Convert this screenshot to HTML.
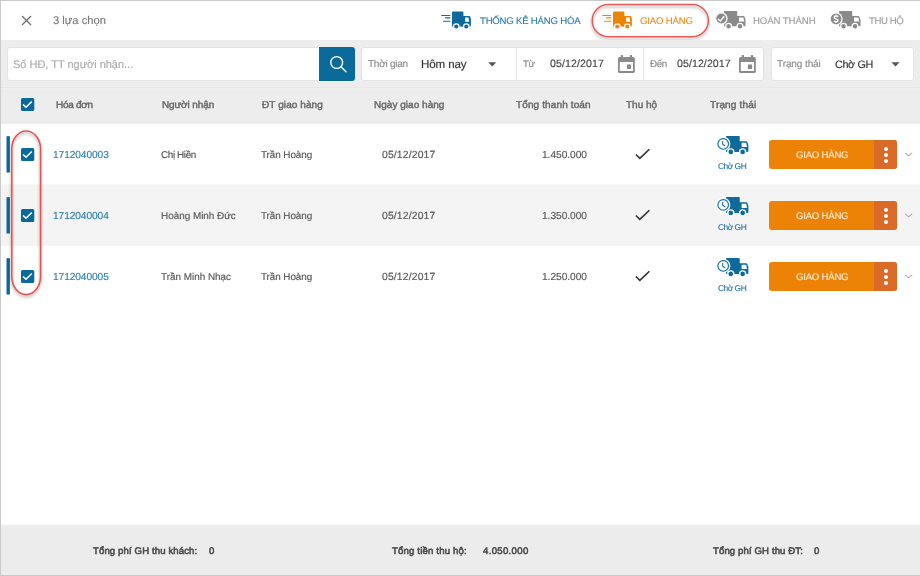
<!DOCTYPE html>
<html><head><meta charset="utf-8">
<style>
*{box-sizing:border-box;margin:0;padding:0}
html,body{width:920px;height:576px;overflow:hidden;background:#fff;font-family:"Liberation Sans",sans-serif}
.a{position:absolute}
.t{position:absolute;white-space:nowrap;line-height:1;text-rendering:geometricPrecision;-webkit-text-stroke:0.15px currentColor;will-change:transform}
.box{background:#fff;border:1px solid #e3e3e3;border-radius:3px}
</style></head><body><div id="w" style="position:absolute;left:0;top:0;width:920px;height:576px;overflow:hidden;filter:blur(0.3px)">
<div class="a" style="left:0;top:0;width:1px;height:576px;background:#cacaca"></div>
<div class="a" style="left:0;top:0;width:920px;height:1px;background:#cacaca"></div>
<div class="a" style="left:0;top:575px;width:920px;height:1px;background:#cacaca"></div>
<svg class="a" style="left:20px;top:14px" width="13" height="13" viewBox="0 0 13 13"><path d="M2 2L11 11M11 2L2 11" stroke="#707070" stroke-width="1.4" fill="none"/></svg>
<div class="t" style="left:53.00px;top:16px;font-size:11.2px;color:#7a7a7a;letter-spacing:0.006px;">3 lựa chọn</div>
<svg class="a" style="left:441px;top:11px;overflow:visible" width="32" height="20" viewBox="0 0 32 20"><g transform="scale(1.0)"><path d="M0.7 4.5H8.9M4.5 6.8H8.9M2.6 10.25H8.9" stroke="#0e6a9b" stroke-width="1.2" stroke-linecap="round"/><rect x="11" y="0.6" width="11.4" height="15" rx="0.9" fill="#0e6a9b"/><path d="M20.5 5.1H28.3Q29.1 5.1 29.4 5.9L29.9 8.3V14.6Q29.9 15.6 29 15.6H20.5Z" fill="#0e6a9b"/><path d="M24.1 6.4H27.5L28.2 10.75H24.1Z" fill="#fff"/><circle cx="15.3" cy="15.5" r="2.7" fill="#0e6a9b" stroke="#fff" stroke-width="1.2"/><circle cx="25.3" cy="15.5" r="2.7" fill="#0e6a9b" stroke="#fff" stroke-width="1.2"/></g></svg>
<div class="t" style="left:479.60px;top:17px;font-size:9.6px;color:#2a7aa8;letter-spacing:-0.213px;-webkit-text-stroke:0.12px currentColor;">THỐNG KÊ HÀNG HÓA</div>
<svg class="a" style="left:585px;top:0px;overflow:visible" width="132" height="46" viewBox="585 0 132 46"><defs><filter id="sh" x="-20%" y="-50%" width="140%" height="200%"><feGaussianBlur in="SourceAlpha" stdDeviation="1.5"/><feOffset dy="1.5"/><feComponentTransfer><feFuncA type="linear" slope="0.35"/></feComponentTransfer><feMerge><feMergeNode/><feMergeNode in="SourceGraphic"/></feMerge></filter></defs><rect x="592.2" y="4.6" width="116.2" height="32.1" rx="16.05" fill="none" stroke="#e45a57" stroke-width="1.5" filter="url(#sh)"/></svg>
<svg class="a" style="left:601.9px;top:11px;overflow:visible" width="32" height="20" viewBox="0 0 32 20"><g transform="scale(1.0)"><path d="M0.7 4.5H8.9M4.5 6.8H8.9M2.6 10.25H8.9" stroke="#ec8406" stroke-width="1.2" stroke-linecap="round"/><rect x="11" y="0.6" width="11.4" height="15" rx="0.9" fill="#ec8406"/><path d="M20.5 5.1H28.3Q29.1 5.1 29.4 5.9L29.9 8.3V14.6Q29.9 15.6 29 15.6H20.5Z" fill="#ec8406"/><path d="M24.1 6.4H27.5L28.2 10.75H24.1Z" fill="#fff"/><circle cx="15.3" cy="15.5" r="2.7" fill="#ec8406" stroke="#fff" stroke-width="1.2"/><circle cx="25.3" cy="15.5" r="2.7" fill="#ec8406" stroke="#fff" stroke-width="1.2"/></g></svg>
<div class="t" style="left:640.10px;top:17px;font-size:9.6px;color:#ec8a1c;letter-spacing:-0.176px;-webkit-text-stroke:0.12px currentColor;">GIAO HÀNG</div>
<svg class="a" style="left:713.9px;top:7.300000000000001px;overflow:visible" width="36" height="24" viewBox="-10 -4 36 24"><g transform="scale(1.0)"><rect x="0" y="0.1" width="13.2" height="15.2" rx="0.6" fill="#8a8a8a"/><path d="M11.5 5.1H19.4Q20.3 5.1 20.6 5.9L21.5 8.7V14.4Q21.5 15.3 20.7 15.3H11.5Z" fill="#8a8a8a"/><path d="M15 6.4H19.4L20.2 10.5H15Z" fill="#fff"/><circle cx="4.6" cy="15.3" r="2.9" fill="#8a8a8a" stroke="#fff" stroke-width="1.3"/><circle cx="16" cy="15.3" r="2.9" fill="#8a8a8a" stroke="#fff" stroke-width="1.3"/><circle cx="-2.7" cy="7.5" r="6.3" fill="#fff"/><circle cx="-2.7" cy="7.5" r="5.0" fill="#8a8a8a"/><path d="M-6.0 8.0L-3.7 10.1L0.2 5.2" stroke="#fff" stroke-width="1.4" fill="none"/></g></svg>
<div class="t" style="left:753.00px;top:17px;font-size:9.6px;color:#9a9a9a;letter-spacing:-0.076px;-webkit-text-stroke:0.12px currentColor;">HOÀN THÀNH</div>
<svg class="a" style="left:829.25px;top:7.300000000000001px;overflow:visible" width="36" height="24" viewBox="-10 -4 36 24"><g transform="scale(1.0)"><rect x="0" y="0.1" width="13.2" height="15.2" rx="0.6" fill="#8a8a8a"/><path d="M11.5 5.1H19.4Q20.3 5.1 20.6 5.9L21.5 8.7V14.4Q21.5 15.3 20.7 15.3H11.5Z" fill="#8a8a8a"/><path d="M15 6.4H19.4L20.2 10.5H15Z" fill="#fff"/><circle cx="4.6" cy="15.3" r="2.9" fill="#8a8a8a" stroke="#fff" stroke-width="1.3"/><circle cx="16" cy="15.3" r="2.9" fill="#8a8a8a" stroke="#fff" stroke-width="1.3"/><circle cx="-2.95" cy="7.9" r="6.6" fill="#fff"/><circle cx="-2.95" cy="7.9" r="5.35" fill="#8a8a8a"/><g transform="translate(-2.95 7.9)"><path d="M1.9 -1.9C1.7 -2.6 1.1 -2.9 0 -2.9C-1.2 -2.9 -1.9 -2.3 -1.9 -1.5C-1.9 -0.6 -1.0 -0.3 0 0C1.1 0.3 2.0 0.6 2.0 1.6C2.0 2.5 1.2 2.9 0 2.9C-1.1 2.9 -1.8 2.5 -2.1 1.8" stroke="#fff" stroke-width="1.35" fill="none"/><path d="M0 -4.2V-2.8M0 2.8V4.2" stroke="#fff" stroke-width="1.2"/></g></g></svg>
<div class="t" style="left:868.90px;top:17px;font-size:9.6px;color:#9a9a9a;letter-spacing:-0.398px;-webkit-text-stroke:0.12px currentColor;">THU HỘ</div>
<div class="a" style="left:1px;top:40px;width:919px;height:48px;background:#ededed"></div>
<div class="a box" style="left:7px;top:47px;width:349px;height:34px"></div>
<div class="t" style="left:12.70px;top:60px;font-size:11px;color:#ababab;letter-spacing:-0.016px;">Số HĐ, TT người nhận...</div>
<div class="a" style="left:319px;top:47px;width:36px;height:34px;background:#0a6b9b;border-radius:0 3px 3px 0"></div>
<svg class="a" style="left:326px;top:52px" width="24" height="24" viewBox="0 0 24 24"><circle cx="10.7" cy="10.5" r="5.9" stroke="#fff" stroke-width="1.4" fill="none"/><path d="M15.2 15L20 19.8" stroke="#fff" stroke-width="1.5" stroke-linecap="round"/></svg>
<div class="a box" style="left:361px;top:47px;width:403px;height:34px"></div>
<div class="a" style="left:516px;top:47px;width:1px;height:34px;background:#e4e4e4"></div>
<div class="a" style="left:643px;top:47px;width:1px;height:34px;background:#e4e4e4"></div>
<div class="a box" style="left:771px;top:47px;width:143px;height:34px"></div>
<div class="t" style="left:367.60px;top:60px;font-size:10px;color:#8a8a8a;letter-spacing:-0.253px;">Thời gian</div>
<div class="t" style="left:421.10px;top:59px;font-size:11.6px;color:#333333;letter-spacing:-0.122px;">Hôm nay</div>
<svg class="a" style="left:486px;top:60px" width="12" height="8" viewBox="0 0 12 8"><path d="M2.2 2.3H10.3L6.25 6.5Z" fill="#555"/></svg>
<div class="t" style="left:523.30px;top:60px;font-size:9.6px;color:#8a8a8a;letter-spacing:-0.388px;">Từ</div>
<div class="t" style="left:550.30px;top:59px;font-size:10.6px;color:#444444;letter-spacing:0.094px;">05/12/2017</div>
<svg class="a" style="left:617px;top:53.8px" width="19" height="20" viewBox="-1 -3 19 20"><rect x="0" y="0" width="16.8" height="16" rx="1.6" fill="#8a8a8a"/><rect x="1.8" y="5" width="13.2" height="9" fill="#fff"/><rect x="8.9" y="7.5" width="4.2" height="4.5" fill="#8a8a8a"/><rect x="2.7" y="-1.9" width="2.3" height="2.5" fill="#8a8a8a"/><rect x="11.8" y="-1.9" width="2.3" height="2.5" fill="#8a8a8a"/></svg>
<div class="t" style="left:650.30px;top:60px;font-size:9.8px;color:#8a8a8a;letter-spacing:-0.441px;">Đến</div>
<div class="t" style="left:677.30px;top:59px;font-size:10.6px;color:#444444;letter-spacing:0.072px;">05/12/2017</div>
<svg class="a" style="left:738.1px;top:53.8px" width="19" height="20" viewBox="-1 -3 19 20"><rect x="0" y="0" width="16.8" height="16" rx="1.6" fill="#8a8a8a"/><rect x="1.8" y="5" width="13.2" height="9" fill="#fff"/><rect x="8.9" y="7.5" width="4.2" height="4.5" fill="#8a8a8a"/><rect x="2.7" y="-1.9" width="2.3" height="2.5" fill="#8a8a8a"/><rect x="11.8" y="-1.9" width="2.3" height="2.5" fill="#8a8a8a"/></svg>
<div class="t" style="left:777.10px;top:60px;font-size:10px;color:#8a8a8a;letter-spacing:-0.094px;">Trạng thái</div>
<div class="t" style="left:834.90px;top:60px;font-size:10.8px;color:#333333;letter-spacing:-0.359px;">Chờ GH</div>
<svg class="a" style="left:889px;top:60px" width="12" height="8" viewBox="0 0 12 8"><path d="M2.4 2.2H10.6L6.5 6.5Z" fill="#555"/></svg>
<svg class="a" style="left:0;top:0" width="920" height="576"><rect x="1" y="87.2" width="919" height="1" fill="#e5e5e5"/><rect x="1" y="88.2" width="919" height="35.3" fill="#ededed"/><rect x="1" y="121.8" width="919" height="1.7" fill="#e9e9e9"/></svg>
<svg class="a" style="left:20.8px;top:98px" width="14" height="14" viewBox="0 0 14 14"><rect x="0" y="0" width="13.3" height="13.1" rx="1.6" fill="#09699a"/><path d="M2 6.5L5 9.2L10.8 3.5" stroke="#fff" stroke-width="1.6" fill="none"/></svg>
<div class="t" style="left:55.70px;top:101px;font-size:10px;color:#666666;letter-spacing:-0.283px;-webkit-text-stroke:0.42px currentColor;">Hóa đơn</div>
<div class="t" style="left:161.70px;top:101px;font-size:10px;color:#666666;letter-spacing:-0.119px;-webkit-text-stroke:0.42px currentColor;">Người nhận</div>
<div class="t" style="left:262.00px;top:101px;font-size:10px;color:#666666;letter-spacing:0.086px;-webkit-text-stroke:0.42px currentColor;">ĐT giao hàng</div>
<div class="t" style="left:373.50px;top:101px;font-size:10px;color:#666666;letter-spacing:0.027px;-webkit-text-stroke:0.42px currentColor;">Ngày giao hàng</div>
<div class="t" style="left:516.40px;top:101px;font-size:10px;color:#666666;letter-spacing:0.125px;-webkit-text-stroke:0.42px currentColor;">Tổng thanh toán</div>
<div class="t" style="left:625.80px;top:101px;font-size:10px;color:#666666;letter-spacing:-0.005px;-webkit-text-stroke:0.42px currentColor;">Thu hộ</div>
<div class="t" style="left:709.70px;top:101px;font-size:10px;color:#666666;letter-spacing:0.161px;-webkit-text-stroke:0.42px currentColor;">Trạng thái</div>
<svg class="a" style="left:0;top:0" width="920" height="576"><rect x="1" y="184.4" width="919" height="61.4" fill="#f4f4f4"/></svg>
<svg class="a" style="left:0;top:0px" width="20" height="200"><rect x="6.5" y="136.2" width="3.4" height="36.3" fill="#09699a"/></svg>
<svg class="a" style="left:20.8px;top:147.8px" width="14" height="14" viewBox="0 0 14 14"><rect x="0" y="0" width="13.3" height="13.1" rx="1.6" fill="#09699a"/><path d="M2 6.5L5 9.2L10.8 3.5" stroke="#fff" stroke-width="1.6" fill="none"/></svg>
<div class="t" style="left:52.60px;top:151px;font-size:10.2px;color:#2b7fae;letter-spacing:-0.093px;">1712040003</div>
<div class="t" style="left:161.30px;top:151px;font-size:9.9px;color:#555555;letter-spacing:-0.367px;">Chị Hiền</div>
<div class="t" style="left:261.30px;top:151px;font-size:9.9px;color:#555555;letter-spacing:-0.069px;">Trần Hoàng</div>
<div class="t" style="left:381.50px;top:151px;font-size:10.4px;color:#555555;letter-spacing:0.139px;">05/12/2017</div>
<div class="t" style="left:542.00px;top:151px;font-size:10.2px;color:#555555;letter-spacing:-0.049px;">1.450.000</div>
<svg class="a" style="left:631px;top:143px" width="24" height="20" viewBox="0 0 24 20"><path d="M4.9 11.5L8.85 15.3L18.4 6.25" stroke="#333" stroke-width="1.7" fill="none"/></svg>
<svg class="a" style="left:715.6px;top:132.0px;overflow:visible" width="36" height="24" viewBox="-10 -4 36 24"><g transform="scale(1.04)"><rect x="0" y="0.1" width="13.2" height="15.2" rx="0.6" fill="#0e6a9b"/><path d="M11.5 5.1H19.4Q20.3 5.1 20.6 5.9L21.5 8.7V14.4Q21.5 15.3 20.7 15.3H11.5Z" fill="#0e6a9b"/><path d="M15 6.4H19.4L20.2 10.5H15Z" fill="#fff"/><circle cx="4.6" cy="15.3" r="2.9" fill="#0e6a9b" stroke="#fff" stroke-width="1.3"/><circle cx="16" cy="15.3" r="2.9" fill="#0e6a9b" stroke="#fff" stroke-width="1.3"/><circle cx="-2.7" cy="7.6" r="6.9" fill="#fff"/><circle cx="-2.7" cy="7.6" r="5.1" fill="#fff" stroke="#0e6a9b" stroke-width="1.1"/><path d="M-3.2 4.9V7.9L-0.7 9.6" stroke="#0e6a9b" stroke-width="1" fill="none"/></g></svg>
<div class="t" style="left:717.90px;top:162px;font-size:8.4px;color:#1f6f9e;letter-spacing:-0.477px;-webkit-text-stroke:0.1px currentColor;">Chờ GH</div>
<div class="a" style="left:769px;top:140px;width:128px;height:29px;background:#ec8206;border-radius:3px;overflow:hidden"><div class="a" style="left:105px;top:0;width:23px;height:29px;background:#d96a28"></div></div>
<div class="a" style="left:883.5px;top:146.7px;width:4px;height:4px;border-radius:50%;background:#fff"></div>
<div class="a" style="left:883.5px;top:152.7px;width:4px;height:4px;border-radius:50%;background:#fff"></div>
<div class="a" style="left:883.5px;top:158.8px;width:4px;height:4px;border-radius:50%;background:#fff"></div>
<div class="t" style="left:795.70px;top:151px;font-size:9.6px;color:#fde8d0;letter-spacing:-0.226px;">GIAO HÀNG</div>
<svg class="a" style="left:903px;top:150px" width="12" height="9" viewBox="0 0 12 9"><path d="M2.1 2.9L5.6 5.9L9.1 2.9" stroke="#a8a8a8" stroke-width="1.1" fill="none"/></svg>
<svg class="a" style="left:0;top:61px" width="20" height="200"><rect x="6.5" y="136.2" width="3.4" height="36.3" fill="#09699a"/></svg>
<svg class="a" style="left:20.8px;top:208.8px" width="14" height="14" viewBox="0 0 14 14"><rect x="0" y="0" width="13.3" height="13.1" rx="1.6" fill="#09699a"/><path d="M2 6.5L5 9.2L10.8 3.5" stroke="#fff" stroke-width="1.6" fill="none"/></svg>
<div class="t" style="left:52.60px;top:212px;font-size:10.2px;color:#2b7fae;letter-spacing:-0.093px;">1712040004</div>
<div class="t" style="left:161.30px;top:212px;font-size:9.9px;color:#555555;letter-spacing:0.010px;">Hoàng Minh Đức</div>
<div class="t" style="left:261.30px;top:212px;font-size:9.9px;color:#555555;letter-spacing:-0.069px;">Trần Hoàng</div>
<div class="t" style="left:381.50px;top:212px;font-size:10.4px;color:#555555;letter-spacing:0.139px;">05/12/2017</div>
<div class="t" style="left:542.00px;top:212px;font-size:10.2px;color:#555555;letter-spacing:-0.049px;">1.350.000</div>
<svg class="a" style="left:631px;top:204px" width="24" height="20" viewBox="0 0 24 20"><path d="M4.9 11.5L8.85 15.3L18.4 6.25" stroke="#333" stroke-width="1.7" fill="none"/></svg>
<svg class="a" style="left:715.6px;top:193.0px;overflow:visible" width="36" height="24" viewBox="-10 -4 36 24"><g transform="scale(1.04)"><rect x="0" y="0.1" width="13.2" height="15.2" rx="0.6" fill="#0e6a9b"/><path d="M11.5 5.1H19.4Q20.3 5.1 20.6 5.9L21.5 8.7V14.4Q21.5 15.3 20.7 15.3H11.5Z" fill="#0e6a9b"/><path d="M15 6.4H19.4L20.2 10.5H15Z" fill="#fff"/><circle cx="4.6" cy="15.3" r="2.9" fill="#0e6a9b" stroke="#fff" stroke-width="1.3"/><circle cx="16" cy="15.3" r="2.9" fill="#0e6a9b" stroke="#fff" stroke-width="1.3"/><circle cx="-2.7" cy="7.6" r="6.9" fill="#fff"/><circle cx="-2.7" cy="7.6" r="5.1" fill="#fff" stroke="#0e6a9b" stroke-width="1.1"/><path d="M-3.2 4.9V7.9L-0.7 9.6" stroke="#0e6a9b" stroke-width="1" fill="none"/></g></svg>
<div class="t" style="left:717.90px;top:223px;font-size:8.4px;color:#1f6f9e;letter-spacing:-0.477px;-webkit-text-stroke:0.1px currentColor;">Chờ GH</div>
<div class="a" style="left:769px;top:201px;width:128px;height:29px;background:#ec8206;border-radius:3px;overflow:hidden"><div class="a" style="left:105px;top:0;width:23px;height:29px;background:#d96a28"></div></div>
<div class="a" style="left:883.5px;top:207.7px;width:4px;height:4px;border-radius:50%;background:#fff"></div>
<div class="a" style="left:883.5px;top:213.7px;width:4px;height:4px;border-radius:50%;background:#fff"></div>
<div class="a" style="left:883.5px;top:219.8px;width:4px;height:4px;border-radius:50%;background:#fff"></div>
<div class="t" style="left:795.70px;top:212px;font-size:9.6px;color:#fde8d0;letter-spacing:-0.226px;">GIAO HÀNG</div>
<svg class="a" style="left:903px;top:211px" width="12" height="9" viewBox="0 0 12 9"><path d="M2.1 2.9L5.6 5.9L9.1 2.9" stroke="#a8a8a8" stroke-width="1.1" fill="none"/></svg>
<svg class="a" style="left:0;top:122px" width="20" height="200"><rect x="6.5" y="136.2" width="3.4" height="36.3" fill="#09699a"/></svg>
<svg class="a" style="left:20.8px;top:269.8px" width="14" height="14" viewBox="0 0 14 14"><rect x="0" y="0" width="13.3" height="13.1" rx="1.6" fill="#09699a"/><path d="M2 6.5L5 9.2L10.8 3.5" stroke="#fff" stroke-width="1.6" fill="none"/></svg>
<div class="t" style="left:52.60px;top:273px;font-size:10.2px;color:#2b7fae;letter-spacing:-0.093px;">1712040005</div>
<div class="t" style="left:161.30px;top:273px;font-size:9.9px;color:#555555;letter-spacing:0.010px;">Trần Minh Nhạc</div>
<div class="t" style="left:261.30px;top:273px;font-size:9.9px;color:#555555;letter-spacing:-0.069px;">Trần Hoàng</div>
<div class="t" style="left:381.50px;top:273px;font-size:10.4px;color:#555555;letter-spacing:0.139px;">05/12/2017</div>
<div class="t" style="left:542.00px;top:273px;font-size:10.2px;color:#555555;letter-spacing:-0.049px;">1.250.000</div>
<svg class="a" style="left:631px;top:265px" width="24" height="20" viewBox="0 0 24 20"><path d="M4.9 11.5L8.85 15.3L18.4 6.25" stroke="#333" stroke-width="1.7" fill="none"/></svg>
<svg class="a" style="left:715.6px;top:254.0px;overflow:visible" width="36" height="24" viewBox="-10 -4 36 24"><g transform="scale(1.04)"><rect x="0" y="0.1" width="13.2" height="15.2" rx="0.6" fill="#0e6a9b"/><path d="M11.5 5.1H19.4Q20.3 5.1 20.6 5.9L21.5 8.7V14.4Q21.5 15.3 20.7 15.3H11.5Z" fill="#0e6a9b"/><path d="M15 6.4H19.4L20.2 10.5H15Z" fill="#fff"/><circle cx="4.6" cy="15.3" r="2.9" fill="#0e6a9b" stroke="#fff" stroke-width="1.3"/><circle cx="16" cy="15.3" r="2.9" fill="#0e6a9b" stroke="#fff" stroke-width="1.3"/><circle cx="-2.7" cy="7.6" r="6.9" fill="#fff"/><circle cx="-2.7" cy="7.6" r="5.1" fill="#fff" stroke="#0e6a9b" stroke-width="1.1"/><path d="M-3.2 4.9V7.9L-0.7 9.6" stroke="#0e6a9b" stroke-width="1" fill="none"/></g></svg>
<div class="t" style="left:717.90px;top:284px;font-size:8.4px;color:#1f6f9e;letter-spacing:-0.477px;-webkit-text-stroke:0.1px currentColor;">Chờ GH</div>
<div class="a" style="left:769px;top:262px;width:128px;height:29px;background:#ec8206;border-radius:3px;overflow:hidden"><div class="a" style="left:105px;top:0;width:23px;height:29px;background:#d96a28"></div></div>
<div class="a" style="left:883.5px;top:268.7px;width:4px;height:4px;border-radius:50%;background:#fff"></div>
<div class="a" style="left:883.5px;top:274.7px;width:4px;height:4px;border-radius:50%;background:#fff"></div>
<div class="a" style="left:883.5px;top:280.8px;width:4px;height:4px;border-radius:50%;background:#fff"></div>
<div class="t" style="left:795.70px;top:273px;font-size:9.6px;color:#fde8d0;letter-spacing:-0.226px;">GIAO HÀNG</div>
<svg class="a" style="left:903px;top:272px" width="12" height="9" viewBox="0 0 12 9"><path d="M2.1 2.9L5.6 5.9L9.1 2.9" stroke="#a8a8a8" stroke-width="1.1" fill="none"/></svg>
<svg class="a" style="left:0px;top:120px;overflow:visible" width="60" height="190" viewBox="0 120 60 190"><defs><filter id="sh2" x="-50%" y="-10%" width="200%" height="120%"><feGaussianBlur in="SourceAlpha" stdDeviation="1.5"/><feOffset dy="1.5"/><feComponentTransfer><feFuncA type="linear" slope="0.35"/></feComponentTransfer><feMerge><feMergeNode/><feMergeNode in="SourceGraphic"/></feMerge></filter></defs><path d="M11.75 149.0A14.4 18 0 0 1 40.55 149.0V276.6A14.4 18 0 0 1 11.75 276.6Z" fill="none" stroke="#e5534f" stroke-width="1.6" filter="url(#sh2)"/></svg>
<svg class="a" style="left:0;top:0" width="920" height="576"><rect x="1" y="524.7" width="919" height="50.3" fill="#ececec"/></svg>
<div class="t" style="left:93.40px;top:547px;font-size:9.6px;color:#484848;letter-spacing:0.113px;-webkit-text-stroke:0.55px currentColor;">Tổng phí GH thu khách:</div>
<div class="t" style="left:209.10px;top:547px;font-size:9.6px;color:#484848;letter-spacing:0.000px;-webkit-text-stroke:0.55px currentColor;">0</div>
<div class="t" style="left:392.00px;top:547px;font-size:9.6px;color:#484848;letter-spacing:0.166px;-webkit-text-stroke:0.55px currentColor;">Tổng tiền thu hộ:</div>
<div class="t" style="left:483.00px;top:547px;font-size:9.6px;color:#484848;letter-spacing:0.322px;-webkit-text-stroke:0.55px currentColor;">4.050.000</div>
<div class="t" style="left:712.60px;top:547px;font-size:9.6px;color:#484848;letter-spacing:0.108px;-webkit-text-stroke:0.55px currentColor;">Tổng phí GH thu ĐT:</div>
<div class="t" style="left:814.40px;top:547px;font-size:9.6px;color:#484848;letter-spacing:0.000px;-webkit-text-stroke:0.55px currentColor;">0</div>
</div></body></html>
